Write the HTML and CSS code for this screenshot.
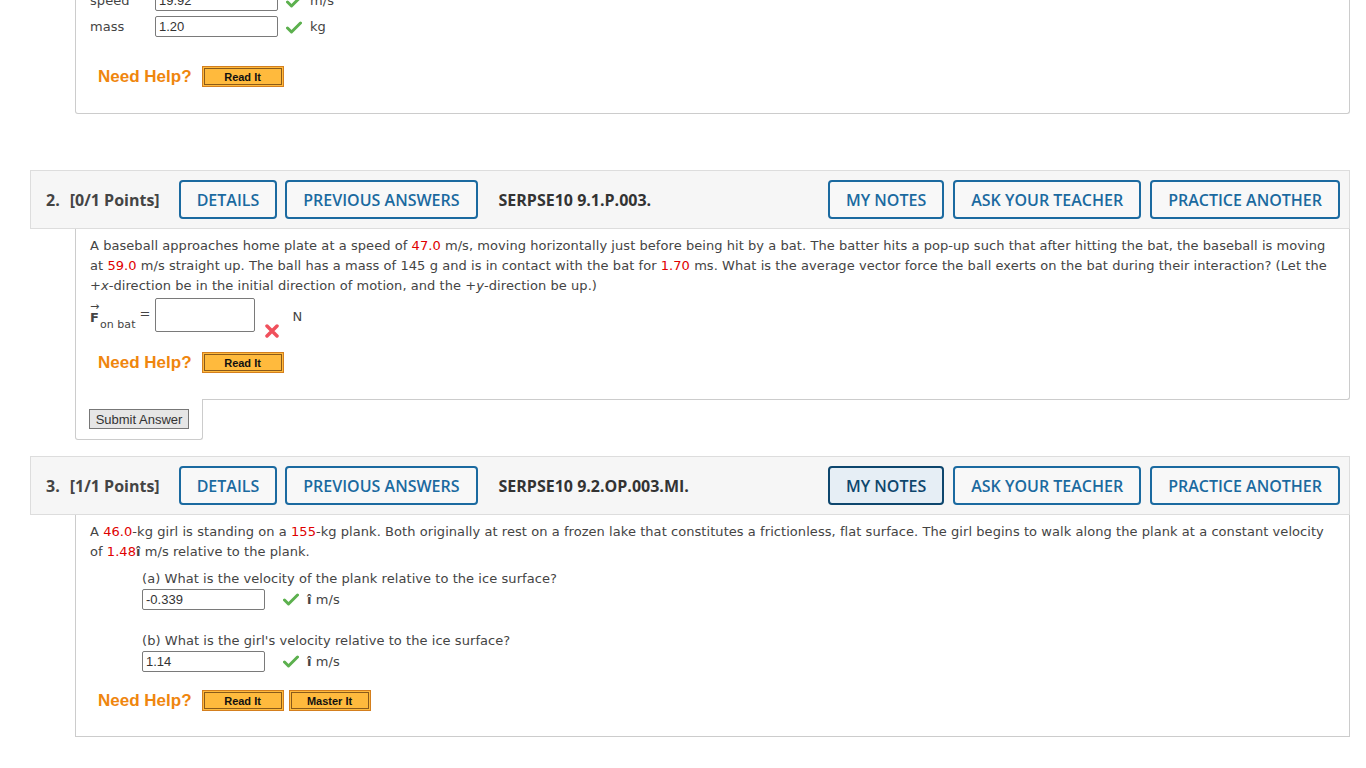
FILE: index.html
```html
<!DOCTYPE html>
<html lang="en">
<head>
  <meta charset="UTF-8" />
  <title>Assignment</title>
  <link rel="stylesheet" href="styles.css">
</head>
<body>
  <div class="page">

    <!-- tail of question 1 -->
    <div class="q-body q-tail">
      <table class="fields">
        <tr>
          <td class="field-label">speed</td>
          <td><input class="ans" type="text" value="19.92" readonly></td>
          <td class="mark"><svg class="check" width="16" height="13" viewBox="0 0 16 13"><path d="M1.5 7 L5.5 11 L14.5 2" /></svg></td>
          <td class="unit">m/s</td>
        </tr>
        <tr>
          <td class="field-label">mass</td>
          <td><input class="ans" type="text" value="1.20" readonly></td>
          <td class="mark"><svg class="check" width="16" height="13" viewBox="0 0 16 13"><path d="M1.5 7 L5.5 11 L14.5 2" /></svg></td>
          <td class="unit">kg</td>
        </tr>
      </table>
      <div class="help">
        <span class="help-label">Need Help?</span>
        <button class="help-btn">Read It</button>
      </div>
    </div>

    <!-- question 2 -->
    <div class="q-head">
      <div class="q-left">
        <span class="q-num">2.</span>
        <span class="q-points">[0/1 Points]</span>
        <button class="q-btn">DETAILS</button>
        <button class="q-btn">PREVIOUS ANSWERS</button>
        <span class="q-code">SERPSE10 9.1.P.003.</span>
      </div>
      <div class="q-right">
        <button class="q-btn">MY NOTES</button>
        <button class="q-btn">ASK YOUR TEACHER</button>
        <button class="q-btn">PRACTICE ANOTHER</button>
      </div>
    </div>
    <div class="q-body q-open">
      <p class="prompt">A baseball approaches home plate at a speed of <span class="num">47.0</span> m/s, moving horizontally just before being hit by a bat. The batter hits a pop-up such that after hitting the bat, the baseball is moving at <span class="num">59.0</span> m/s straight up. The ball has a mass of 145 g and is in contact with the bat for <span class="num">1.70</span> ms. What is the average vector force the ball exerts on the bat during their interaction? (Let the +<i>x</i>-direction be in the initial direction of motion, and the +<i>y</i>-direction be up.)</p>
      <div class="vec-row">
        <span class="vec"><span class="vec-f">F</span><span class="vec-sub">on bat</span></span>
        <span class="eq">=</span>
        <input class="ans ans-big" type="text">
        <svg class="cross" width="14" height="14" viewBox="0 0 14 14"><path d="M2 2 L12 12 M12 2 L2 12" /></svg>
        <span class="unit vec-unit">N</span>
      </div>
      <div class="help">
        <span class="help-label">Need Help?</span>
        <button class="help-btn">Read It</button>
      </div>
    </div>
    <div class="submit-tab">
      <button class="submit-btn">Submit Answer</button>
    </div>

    <!-- question 3 -->
    <div class="q-head">
      <div class="q-left">
        <span class="q-num">3.</span>
        <span class="q-points">[1/1 Points]</span>
        <button class="q-btn">DETAILS</button>
        <button class="q-btn">PREVIOUS ANSWERS</button>
        <span class="q-code">SERPSE10 9.2.OP.003.MI.</span>
      </div>
      <div class="q-right">
        <button class="q-btn active">MY NOTES</button>
        <button class="q-btn">ASK YOUR TEACHER</button>
        <button class="q-btn">PRACTICE ANOTHER</button>
      </div>
    </div>
    <div class="q-body">
      <p class="prompt">A <span class="num">46.0</span>-kg girl is standing on a <span class="num">155</span>-kg plank. Both originally at rest on a frozen lake that constitutes a frictionless, flat surface. The girl begins to walk along the plank at a constant velocity of <span class="num">1.48</span><b>î</b> m/s relative to the plank.</p>
      <div class="part">
        <p class="part-q">(a) What is the velocity of the plank relative to the ice surface?</p>
        <div class="part-row">
          <input class="ans" type="text" value="-0.339" readonly>
          <svg class="check" width="16" height="13" viewBox="0 0 16 13"><path d="M1.5 7 L5.5 11 L14.5 2" /></svg>
          <span class="unit"><b>î</b> m/s</span>
        </div>
      </div>
      <div class="part">
        <p class="part-q">(b) What is the girl's velocity relative to the ice surface?</p>
        <div class="part-row">
          <input class="ans" type="text" value="1.14" readonly>
          <svg class="check" width="16" height="13" viewBox="0 0 16 13"><path d="M1.5 7 L5.5 11 L14.5 2" /></svg>
          <span class="unit"><b>î</b> m/s</span>
        </div>
      </div>
      <div class="help">
        <span class="help-label">Need Help?</span>
        <button class="help-btn">Read It</button>
        <button class="help-btn">Master It</button>
      </div>
    </div>

  </div>
</body>
</html>
```

FILE: styles.css
```css
body {
  margin: 0;
  background: #fff;
  font-family: 'DejaVu Sans', Verdana, sans-serif;
  font-size: 13px;
  letter-spacing: 0.06px;
  color: #444;
}

.page {
  width: 1320px;
  margin-left: 30px;
}

/* question body */
.q-body {
  margin-left: 45px;
  border: 1px solid #ccc;
  border-top: none;
  padding: 7px 14px 25px 14px;
  background: #fff;
}

.q-tail {
  margin-top: -13px;
  padding-top: 0;
  padding-bottom: 26px;
  margin-bottom: 56px;
  border-radius: 0 0 3px 3px;
}

.q-open {
  padding-bottom: 26px;
  border-radius: 0 0 3px 0;
}

.prompt {
  margin: 0;
  line-height: 20px;
}

.num {
  color: #e00000;
}

/* header bar */
.q-head {
  display: flex;
  justify-content: space-between;
  align-items: center;
  height: 57px;
  padding: 0 9px 0 15px;
  background: #f6f6f6;
  border: 1px solid #ddd;
  font-family: 'Open Sans', sans-serif;
  font-size: 16px;
  letter-spacing: 0;
}

.q-left,
.q-right {
  display: flex;
  align-items: center;
}

.q-right {
  gap: 9px;
}

.q-num {
  font-weight: 700;
  color: #444;
  margin-right: 10px;
}

.q-points {
  font-weight: 700;
  color: #444;
  margin-right: 19px;
}

.q-code {
  font-weight: 700;
  color: #333;
  margin-left: 13px;
}

.q-btn {
  height: 39px;
  padding: 0 16px;
  margin-right: 8px;
  border: 2px solid #1b6aa0;
  border-radius: 4px;
  background: #f8f8f8;
  color: #1b6aa0;
  font-family: 'Open Sans', sans-serif;
  font-size: 16px;
  font-weight: 600;
}

.q-right .q-btn {
  margin-right: 0;
}

.q-btn.active {
  background: #e6eef5;
  border-color: #0e466d;
  color: #0e466d;
}

/* answer fields */
.fields {
  border-collapse: collapse;
}

.fields td {
  padding: 0;
  height: 26px;
}

.field-label {
  width: 65px;
}

.ans {
  width: 123px;
  height: 21px;
  box-sizing: border-box;
  border: 1px solid #7a7a7a;
  border-radius: 2px;
  padding: 0 3px;
  font-family: 'Liberation Sans', Arial, sans-serif;
  font-size: 13px;
  letter-spacing: 0;
  color: #333;
  vertical-align: middle;
}

.mark {
  padding: 0 8px !important;
}

.check {
  vertical-align: middle;
}

.check path {
  fill: none;
  stroke: #5cb04e;
  stroke-width: 3;
  stroke-linecap: round;
  stroke-linejoin: round;
}

.unit {
  color: #444;
}

/* vector answer */
.vec-row {
  display: flex;
  align-items: flex-start;
  margin-top: 2px;
  height: 35px;
}

.vec {
  position: relative;
  margin-top: 12px;
}

.vec-f {
  font-weight: 700;
  position: relative;
}

.vec-f::before {
  content: '\2192';
  position: absolute;
  left: 0;
  top: -10px;
  font-size: 11px;
  font-weight: 400;
}

.vec-sub {
  font-size: 11px;
  position: relative;
  top: 6px;
  margin-left: 1px;
}

.eq {
  margin: 8px 4px 0 4px;
}

.ans-big {
  width: 100px;
  height: 34px;
}

.cross {
  margin: 26px 0 0 10px;
}

.cross path {
  stroke: #f0505c;
  stroke-width: 3.5;
  stroke-linecap: round;
}

.vec-unit {
  margin: 11px 0 0 14px;
}

/* parts */
.part {
  margin-left: 52px;
}

.part-q {
  margin: 7px 0 0 0;
  line-height: 20px;
}

.part + .part .part-q {
  margin-top: 21px;
}

.part-row {
  display: flex;
  align-items: center;
}

.part-row .check {
  margin: 0 8px 0 18px;
}

/* help */
.help {
  display: flex;
  align-items: center;
  gap: 5px;
  margin-top: 19px;
  margin-left: 8px;
}

.q-tail .help {
  margin-top: 27px;
}

.part + .help {
  margin-top: 18px;
}

.help-label {
  font-family: 'Liberation Sans', Arial, sans-serif;
  font-weight: 700;
  font-size: 17px;
  letter-spacing: 0;
  color: #ef860e;
  margin-right: 5px;
}

.help-btn {
  width: 82px;
  height: 21px;
  padding: 0;
  border: 1px solid #d47f1e;
  outline: 1px solid #8a5a1a;
  outline-offset: -3px;
  background: #ffba3d;
  font-family: 'Liberation Sans', Arial, sans-serif;
  font-weight: 700;
  font-size: 11px;
  letter-spacing: 0;
  color: #111;
}

/* submit tab */
.submit-tab {
  width: 100px;
  margin: -1px 0 16px 45px;
  padding: 10px 13px 10px 13px;
  border: 1px solid #ccc;
  border-top: none;
  border-radius: 0 0 3px 3px;
  background: #fff;
}

.submit-btn {
  width: 100px;
  height: 20px;
  padding: 0;
  border: 1px solid #777;
  background: #e6e6e6;
  font-family: 'Liberation Sans', Arial, sans-serif;
  font-size: 13px;
  letter-spacing: 0;
  color: #333;
}
```
